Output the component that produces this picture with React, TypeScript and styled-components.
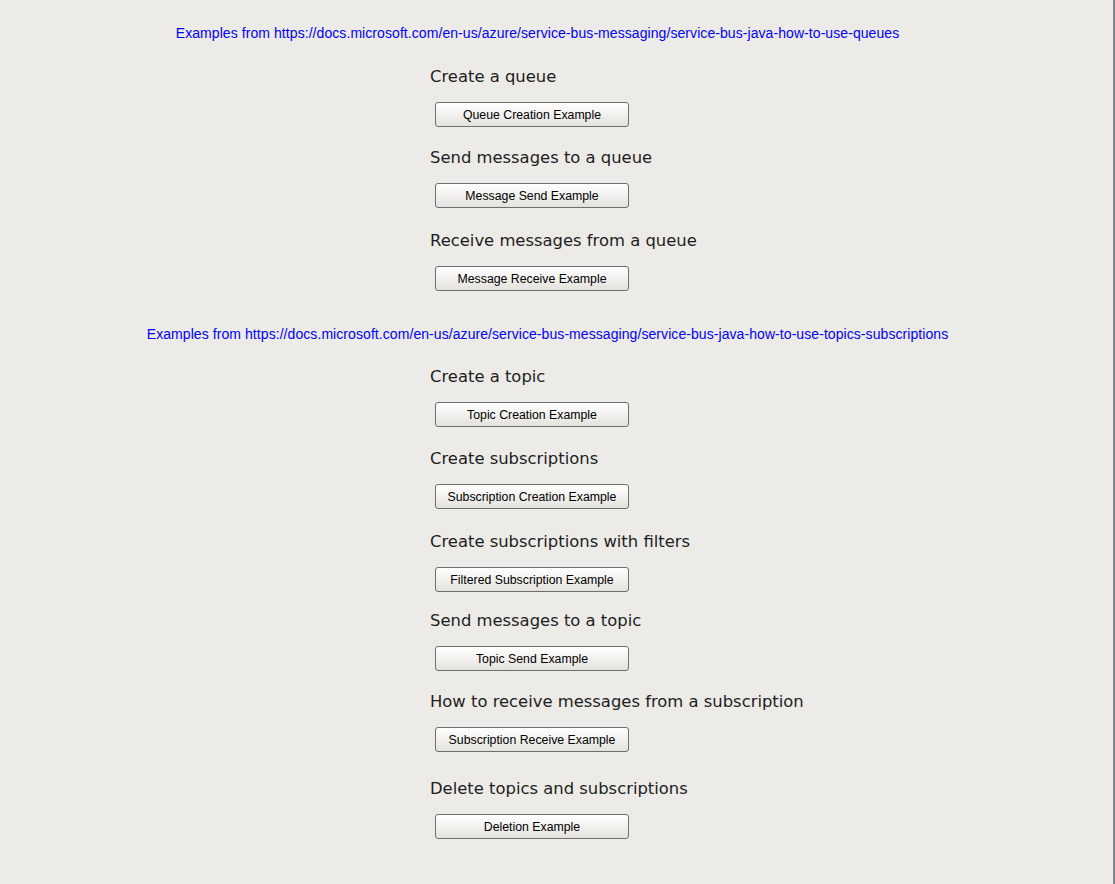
import React from "react";
import styled, { createGlobalStyle } from "styled-components";

const Global = createGlobalStyle`
  html, body { margin: 0; padding: 0; background: #ecebe8; }
  #root { min-height: 884px; }
`;

const Frame = styled.div`
  box-sizing: border-box;
  width: 1115px;
  height: 884px;
  background: #ecebe8;
  border-right: 2px solid #80858a;
  display: flex;
  flex-direction: column;
  overflow: hidden;
`;

const LinkLine = styled.a<{ $top: number; $shift: number }>`
  display: block;
  margin-top: ${(p) => p.$top}px;
  height: 16px;
  line-height: 16px;
  font-family: "Liberation Sans", Arial, sans-serif;
  font-size: 14px;
  letter-spacing: 0.07px;
  color: #0000ff;
  text-decoration: none;
  text-align: center;
  width: 1113px;
  transform: translateX(${(p) => p.$shift}px);
`;

const Column = styled.div`
  display: flex;
  flex-direction: column;
  align-items: flex-start;
  margin-left: 430px;
`;

const Section = styled.div<{ $top: number }>`
  display: flex;
  flex-direction: column;
  align-items: flex-start;
  margin-top: ${(p) => p.$top}px;
`;

const Heading = styled.div`
  height: 20px;
  line-height: 20px;
  font-family: "DejaVu Sans", "Liberation Sans", sans-serif;
  font-weight: 400;
  font-size: 16.4px;
  color: #1e1e1e;
  margin: 1px 0 15px 0;
  white-space: nowrap;
`;

const Button = styled.button`
  box-sizing: border-box;
  margin: 0 0 0 5px;
  width: 194px;
  height: 25px;
  padding: 0;
  border: 1px solid #6f6f6f;
  border-radius: 3px;
  background: linear-gradient(#ffffff 0%, #f4f3f1 45%, #e3e1dc 100%);
  font-family: "Liberation Sans", Arial, sans-serif;
  font-size: 12.3px;
  color: #000;
  text-align: center;
  cursor: pointer;
`;

type Item = { title: string; button: string; top: number };

const queues: Item[] = [
  { title: "Create a queue", button: "Queue Creation Example", top: 25 },
  { title: "Send messages to a queue", button: "Message Send Example", top: 20 },
  { title: "Receive messages from a queue", button: "Message Receive Example", top: 22 },
];

const topics: Item[] = [
  { title: "Create a topic", button: "Topic Creation Example", top: 24 },
  { title: "Create subscriptions", button: "Subscription Creation Example", top: 21 },
  { title: "Create subscriptions with filters", button: "Filtered Subscription Example", top: 22 },
  { title: "Send messages to a topic", button: "Topic Send Example", top: 18 },
  { title: "How to receive messages from a subscription", button: "Subscription Receive Example", top: 20 },
  { title: "Delete topics and subscriptions", button: "Deletion Example", top: 26 },
];

const Group = ({ items }: { items: Item[] }) => (
  <Column>
    {items.map((it) => (
      <Section key={it.title} $top={it.top}>
        <Heading>{it.title}</Heading>
        <Button>{it.button}</Button>
      </Section>
    ))}
  </Column>
);

export default function App() {
  return (
    <>
      <Global />
      <Frame>
        <LinkLine $top={25} $shift={-19}>
          Examples from https://docs.microsoft.com/en-us/azure/service-bus-messaging/service-bus-java-how-to-use-queues
        </LinkLine>
        <Group items={queues} />
        <LinkLine $top={35} $shift={-9}>
          Examples from https://docs.microsoft.com/en-us/azure/service-bus-messaging/service-bus-java-how-to-use-topics-subscriptions
        </LinkLine>
        <Group items={topics} />
      </Frame>
    </>
  );
}
